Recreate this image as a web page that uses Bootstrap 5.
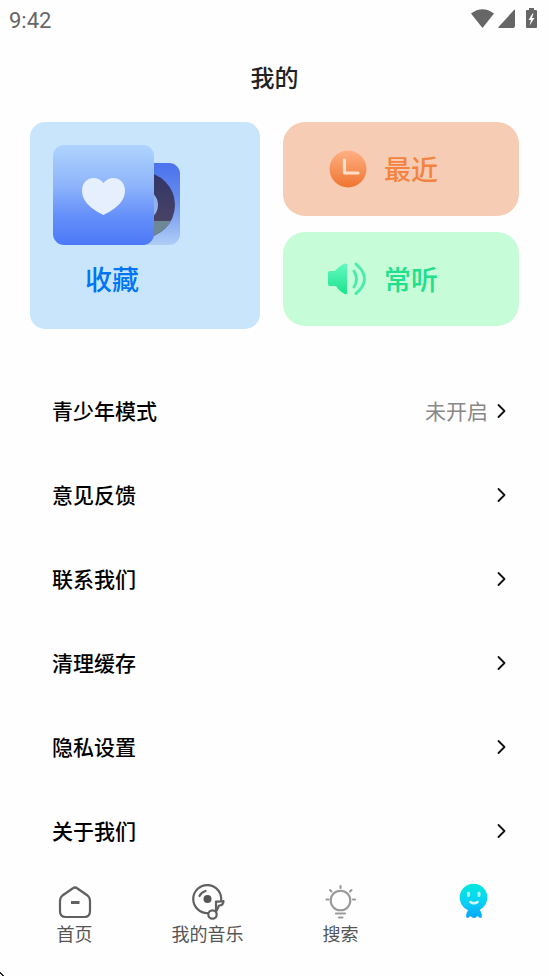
<!DOCTYPE html>
<html lang="zh-CN">
<head>
<meta charset="utf-8">
<meta name="viewport" content="width=device-width, initial-scale=1">
<title>我的</title>
<link href="https://cdn.jsdelivr.net/npm/bootstrap@5.3.0/dist/css/bootstrap.min.css" rel="stylesheet">
<style>
body { background: #fefefe; color: #000; font-family: Roboto, "Noto Sans CJK SC", sans-serif; }
svg { display: block; flex: none; }
.status-bar { height: 38px; padding: 0 8px 0 9px; color: #666; font-size: 21px; -webkit-text-stroke: 0; }
.status-bar span { font-size: 22px; padding-top: 2px; }
.page-title { font-size: 24px; line-height: 36px; padding: 23px 0 25px; color: #222; font-weight: 500; }
.tiles { display: grid; grid-template-columns: 230fr 236fr; gap: 23px; padding: 0 30px; }
.tile { font-size: 27px; line-height: 40px; font-weight: 500; text-decoration: none; }
.tile-fav { background: #c9e5fb; color: #0076f5; border-radius: 15px; padding: 23px 23px 28px; }
.tile-fav span { padding-left: 32px; margin-top: 16px; }
.tile-stack { gap: 16px; }
.tile-small { height: 94px; border-radius: 22px; padding-left: 44px; gap: 15px; }
.tile-small span, .settings span, .settings small { padding-top: 3px; }
.tile-recent { background: #f6ccb4; color: #f4833f; }
.tile-often { background: #c7fcd8; color: #20df8d; }
.settings { padding: 40px 42px 0 52px; }
.settings a { height: 84px; font-size: 21px; font-weight: 500; color: #000; text-decoration: none; }
.settings small { font-size: 21px; font-weight: 400; color: #888; margin-right: 8px; }
.tabs { padding: 7px 9px 26px 8px; }
.tabs a { flex: 1 1 0; color: #555; font-size: 18px; line-height: 26px; text-decoration: none; min-height: 71px; }
.corner { position: fixed; left: 0; bottom: 0; }
</style>
</head>
<body>
<header>
  <div class="status-bar d-flex align-items-center justify-content-between">
    <span>9:42</span>
    <svg width="70" height="22" viewBox="0 0 70 22" fill="#666" aria-hidden="true">
      <path d="M0 5.500Q11.500-3 23 5.500L11.500 20Z"/>
      <path d="M44 2V18Q44 20 42 20H28Q27 20 27.500 19L43 2Q44 1 44 2Z"/>
      <path fill-rule="evenodd" d="M58 0h5v2h2q1 0 1 1v16q0 1-1 1h-9q-1 0-1-1V3q0-1 1-1h2zM61.500 5.500L57.500 12h2.500l-1.500 5.500L63.500 10h-2.500l1.500-4.500z"/>
    </svg>
  </div>
  <h1 class="page-title text-center m-0">我的</h1>
</header>
<main>
  <div class="tiles">
    <a href="#" class="tile tile-fav d-flex flex-column">
      <svg width="128" height="100" viewBox="0 0 128 100" aria-hidden="true">
        <defs>
          <linearGradient id="cover" x2="0" y2="1"><stop stop-color="#b0d3fd"/><stop offset=".4" stop-color="#8eb5fb"/><stop offset=".72" stop-color="#648efa"/><stop offset="1" stop-color="#4b79f7"/></linearGradient>
          <linearGradient id="sleeve" x2="0" y2="1"><stop stop-color="#4c72ee"/><stop offset=".4" stop-color="#6289ee"/><stop offset="1" stop-color="#b0cdf6"/></linearGradient>
          <linearGradient id="disc" x2="0" y2="1"><stop stop-color="#303568"/><stop offset="1" stop-color="#514765"/></linearGradient>
          <clipPath id="lower"><path d="M80 76h48v24H80z"/></clipPath>
        </defs>
        <rect x="67" y="18" width="60" height="82" rx="11" fill="url(#sleeve)"/>
        <circle cx="89" cy="60" r="33" fill="url(#disc)"/>
        <circle cx="89" cy="60" r="33" fill="#6d8797" clip-path="url(#lower)"/>
        <circle cx="89" cy="60" r="16" fill="#91b3ed"/>
        <rect width="101" height="100" rx="11" fill="url(#cover)"/>
        <path d="M50.500 70C43 66 29 59 29 45.500C29 33 43 28.500 50.500 38C58 28.500 72 33 72 45.500C72 59 58 66 50.500 70Z" fill="#e5effe"/>
      </svg>
      <span>收藏</span>
    </a>
    <div class="tile-stack d-flex flex-column">
      <a href="#" class="tile tile-small tile-recent d-flex align-items-center">
        <svg width="42" height="40" viewBox="0 0 42 40" aria-hidden="true">
          <defs><linearGradient id="clock" x2="0" y2="1"><stop stop-color="#ffb084"/><stop offset="1" stop-color="#ef7430"/></linearGradient></defs>
          <circle cx="21" cy="20" r="18.500" fill="url(#clock)"/>
          <path d="M17.500 11V24H31" fill="none" stroke="#ffdec9" stroke-width="3.200" stroke-linecap="round" stroke-linejoin="round"/>
        </svg>
        <span>最近</span>
      </a>
      <a href="#" class="tile tile-small tile-often d-flex align-items-center">
        <svg width="42" height="40" viewBox="0 0 42 40" aria-hidden="true">
          <defs><linearGradient id="horn" gradientUnits="userSpaceOnUse" x1="0" y1="4" x2="0" y2="36"><stop stop-color="#65f8c1"/><stop offset="1" stop-color="#19e38c"/></linearGradient></defs>
          <path d="M3 12H8Q13 6 18 4.500Q20 4 20 6V34Q20 36 18 35Q13 33 9 27H3Q1 27 1 25V14Q1 12 3 12Z" fill="url(#horn)"/>
          <path d="M27 12Q32 20 27 28M29 5Q46 20 29 34.500" fill="none" stroke="#4aebad" stroke-width="3" stroke-linecap="round"/>
        </svg>
        <span>常听</span>
      </a>
    </div>
  </div>
  <svg class="d-none" aria-hidden="true"><symbol id="chevron" viewBox="0 0 11 16"><path d="M2.500 2L8.500 8L2.500 14" fill="none" stroke="#111" stroke-width="1.800" stroke-linecap="round" stroke-linejoin="round"/></symbol></svg>
  <nav class="settings d-flex flex-column" aria-label="设置">
    <a href="#" class="d-flex align-items-center"><span class="me-auto">青少年模式</span><small>未开启</small><svg width="11" height="16"><use href="#chevron"/></svg></a>
    <a href="#" class="d-flex align-items-center"><span class="me-auto">意见反馈</span><svg width="11" height="16"><use href="#chevron"/></svg></a>
    <a href="#" class="d-flex align-items-center"><span class="me-auto">联系我们</span><svg width="11" height="16"><use href="#chevron"/></svg></a>
    <a href="#" class="d-flex align-items-center"><span class="me-auto">清理缓存</span><svg width="11" height="16"><use href="#chevron"/></svg></a>
    <a href="#" class="d-flex align-items-center"><span class="me-auto">隐私设置</span><svg width="11" height="16"><use href="#chevron"/></svg></a>
    <a href="#" class="d-flex align-items-center"><span class="me-auto">关于我们</span><svg width="11" height="16"><use href="#chevron"/></svg></a>
  </nav>
</main>
<nav class="tabs d-flex" aria-label="导航">
  <a href="#" class="d-flex flex-column align-items-center">
    <svg width="38" height="42" viewBox="0 0 38 42" fill="none" stroke="#606060" stroke-width="2.200" aria-hidden="true">
      <path d="M16.500 8.500Q19 6.500 21.500 8.500L31.500 15.500Q34 17.500 34 21V31Q34 37 28.500 37H9.500Q4 37 4 31V21Q4 17.500 6.500 15.500Z"/>
      <path d="M15 22.500H23.500" stroke-width="3"/>
    </svg>
    <span>首页</span>
  </a>
  <a href="#" class="d-flex flex-column align-items-center">
    <svg width="38" height="42" viewBox="0 0 38 42" fill="none" stroke="#606060" stroke-width="2.200" aria-hidden="true">
      <path d="M19.500 33A14 14 0 1 1 32 21.500"/>
      <path d="M10.500 16Q12 12.500 16.500 11" stroke-linecap="round"/>
      <circle cx="18.500" cy="19" r="4" fill="#555" stroke="none"/>
      <path d="M27 34V21.500Q31 22 34.500 21Q34.500 25.500 30 25.500L27.500 31" stroke-linejoin="round"/>
      <circle cx="23.500" cy="34.500" r="4.200" fill="#fefefe"/>
    </svg>
    <span>我的音乐</span>
  </a>
  <a href="#" class="d-flex flex-column align-items-center">
    <svg width="38" height="42" viewBox="0 0 38 42" fill="none" stroke="#999" stroke-width="2.100" stroke-linecap="round" aria-hidden="true">
      <circle cx="18.500" cy="20.500" r="9.800"/>
      <path d="M18.500 6V8M8 10L9.500 11.500M29.500 10L28 11.500M4.500 19.500H6.500M31 19.500H33M14 33.500H23M17 37.500H20.500"/>
    </svg>
    <span>搜索</span>
  </a>
  <a href="#" class="d-flex flex-column align-items-center" aria-label="我的" aria-current="page">
    <svg width="38" height="42" viewBox="0 0 38 42" aria-hidden="true">
      <defs><linearGradient id="face" gradientUnits="userSpaceOnUse" x1="0" y1="4" x2="0" y2="38"><stop stop-color="#00e9de"/><stop offset=".5" stop-color="#0bd3f3"/><stop offset="1" stop-color="#08a6fa"/></linearGradient></defs>
      <g fill="url(#face)">
        <circle cx="18.500" cy="17.500" r="13.800"/>
        <path d="M13 28H25Q24 30 26 32Q27.500 35 26.500 38Q24 38 22.500 36Q21 38 19 38Q17 38 15.500 36Q14 38 11.500 38Q10.500 35 12 32Q14 30 13 28Z"/>
      </g>
      <path d="M13.500 13V15.500M24 13V15.500" stroke="#aaf8f5" stroke-width="3" stroke-linecap="round"/>
      <path d="M15.500 22Q19 24.500 22.500 22" fill="none" stroke="#d5fcff" stroke-width="2.600" stroke-linecap="round"/>
    </svg>
  </a>
</nav>
<svg class="corner" width="4" height="4" viewBox="0 0 4 4" aria-hidden="true"><path d="M0 0h1v1h1v1h1v1h1v1H2V3H1V2H0z" fill="#222"/></svg>
<script src="https://cdn.jsdelivr.net/npm/bootstrap@5.3.0/dist/js/bootstrap.bundle.min.js"></script>
</body>
</html>
